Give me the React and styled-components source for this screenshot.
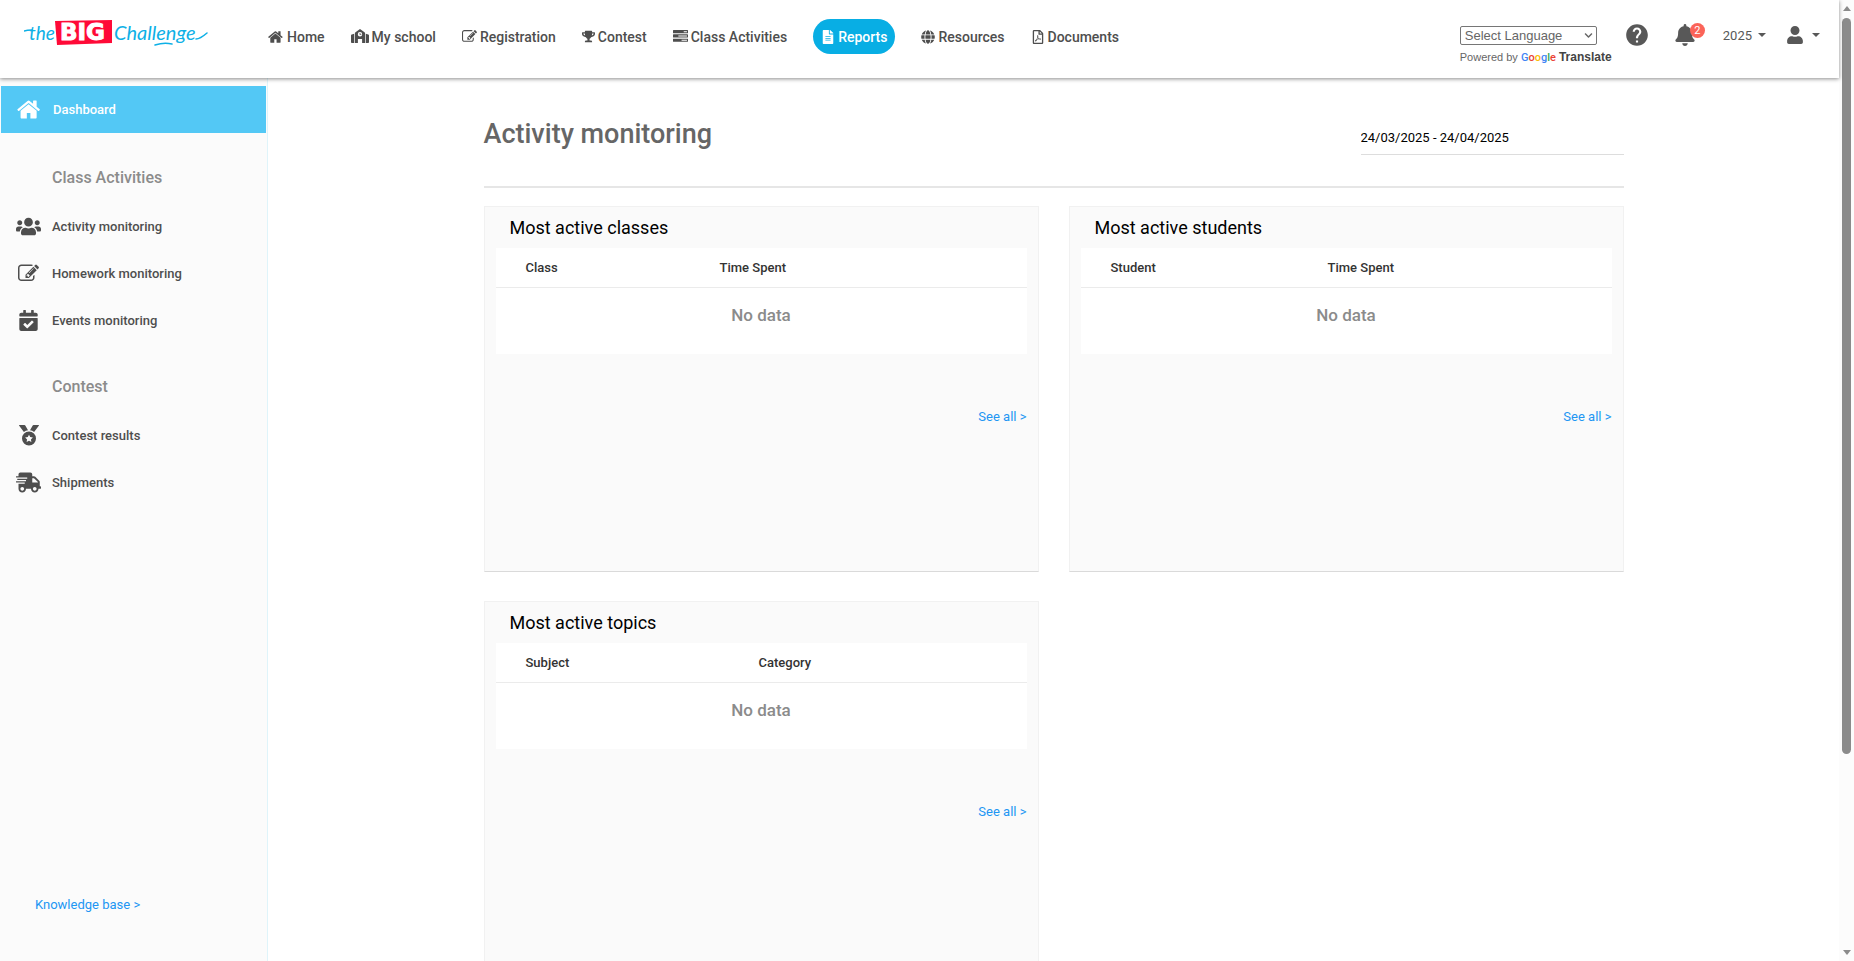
import React, { Component } from 'react';
import styled, { createGlobalStyle } from 'styled-components'
import { FaTrophy, FaFileAlt, FaGlobe, FaRegFilePdf, FaUsers, FaCalendarCheck, FaShippingFast, FaBell, FaUser, FaChevronDown } from 'react-icons/fa'
import { MdHelp } from 'react-icons/md'

const GlobalStyle = createGlobalStyle`
  * {
    box-sizing: border-box;
  }
  body {
    margin: 0;
    font-family: Roboto, sans-serif;
    font-size: 13px;
    color: #4e4e4e;
    background: #ffffff;
  }
  a {
    color: inherit;
    text-decoration: none;
  }
  button, input, select {
    font-family: inherit;
    color: inherit;
  }
  svg {
    flex-shrink: 0;
  }
`

const MainContainer = styled.div`
  display: grid;
  grid-template-columns: 1fr 15px;
  height: 100vh;
  overflow: hidden;
`

const Page = styled.div`
  display: flex;
  flex-direction: column;
  min-width: 0;
  min-height: 0;
`

const Header = styled.header`
  display: flex;
  align-items: flex-start;
  height: 78px;
  flex-shrink: 0;
  padding: 0 19px 0 24px;
  background: #ffffff;
  box-shadow: 0 1px 4px rgba(0, 0, 0, 0.45);
  position: relative;
  z-index: 2;
`

const LogoLink = styled.a`
  width: 244px;
  padding-top: 18px;
`

const Nav = styled.nav`
  display: flex;
  gap: 26px;
  padding-top: 19px;
`

const NavLink = styled.a`
  display: flex;
  align-items: center;
  gap: 3px;
  height: 35px;
  padding: ${props => props.$active ? '0 8px' : '0'};
  border-radius: 18px;
  font-size: 14px;
  font-weight: 500;
  white-space: nowrap;
  color: ${props => props.$active ? '#ffffff' : '#4e4e4e'};
  background: ${props => props.$active ? '#08aee4' : 'transparent'};
`

const Tools = styled.div`
  display: flex;
  align-items: flex-start;
  margin-left: auto;
  padding-top: 24px;
`

const Translate = styled.div`
  width: 152px;
  margin-right: 12px;
  font-family: "Liberation Sans", Arial, sans-serif;
  font-size: 11px;
  color: #666666;
  white-space: nowrap;

  b {
    font-size: 12px;
    color: #444444;
  }
`

const SelectWrap = styled.label`
  display: grid;
  align-items: center;
  width: 137px;
  margin: 2px 0 5px;

  select {
    grid-area: 1 / 1;
    appearance: none;
    height: 19px;
    width: 100%;
    padding: 0 4px;
    border: 1px solid #767676;
    border-radius: 2px;
    background: #ffffff;
    font-size: 13px;
    color: #666666;
  }
  svg {
    grid-area: 1 / 1;
    justify-self: end;
    margin-right: 4px;
    pointer-events: none;
  }
`

const Google = styled.span`
  font-family: Roboto, sans-serif;
  font-size: 11px;
  font-weight: 500;
`

const Letter = styled.span`
  color: ${props => props.$color};
`

const IconButton = styled.button`
  display: flex;
  align-items: center;
  gap: ${props => props.$gap || '0'};
  height: 22px;
  margin-left: ${props => props.$left || '0'};
  padding: 0;
  border: 0;
  background: none;
  position: relative;
  font-size: 13px;
  color: #585858;
`

const Caret = styled.span`
  border: 4px solid transparent;
  border-top-color: #585858;
  border-bottom: 0;
`

const Badge = styled.span`
  position: absolute;
  top: -1px;
  right: -9px;
  width: 15px;
  height: 15px;
  border-radius: 50%;
  background: #fb6459;
  color: #ffffff;
  font-size: 11px;
  line-height: 15px;
  text-align: center;
`

const Body = styled.div`
  display: grid;
  grid-template-columns: 268px 1fr;
  flex: 1;
  min-height: 0;
`

const Sidebar = styled.aside`
  display: flex;
  flex-direction: column;
  padding: 8px 1px 0;
  border-right: 1px solid #dff4fa;
  background: #fbfbfb;
`

const SideTitle = styled.h2`
  margin: 33px 0 25px 51px;
  font-size: 16px;
  font-weight: 500;
  line-height: 24px;
  color: #8b8b8b;
`

const SideLink = styled.a`
  display: grid;
  grid-template-columns: 47px 1fr;
  align-items: center;
  height: 47px;
  padding-left: ${props => props.$active ? '5px' : '4px'};
  font-size: 13px;
  font-weight: 500;
  color: ${props => props.$active ? '#ffffff' : '#4e4e4e'};
  background: ${props => props.$active ? '#53c8f5' : 'transparent'};

  svg {
    justify-self: center;
  }
`

const SideGroup = styled.div`
  display: flex;
  flex-direction: column;
  margin: -12px 0 -2px;
`

const Knowledge = styled.a`
  margin: auto 0 46px 34px;
  line-height: 20px;
  font-size: 13px;
  color: #2196f3;
`

const Content = styled.main`
  min-height: 0;
  overflow: hidden;
  padding: 33px 30px 0;
`

const Inner = styled.div`
  max-width: 1140px;
  margin: 0 auto;
`

const TitleRow = styled.div`
  display: flex;
  justify-content: space-between;
  align-items: flex-start;
  height: 77px;
  border-bottom: 2px solid #e6e6e6;
  margin-bottom: 18px;
`

const PageTitle = styled.h1`
  margin: 6px 0 0;
  font-size: 27px;
  font-weight: 500;
  line-height: 34px;
  color: #666666;
`

const DateInput = styled.input`
  width: 263px;
  height: 33px;
  margin-top: 11px;
  padding: 0 0 2px;
  border: 0;
  border-bottom: 1px solid #dddddd;
  background: transparent;
  font-size: 13px;
  color: #000000;
`

const Cards = styled.div`
  display: grid;
  grid-template-columns: 1fr 1fr;
  gap: 29px 30px;
`

const Card = styled.section`
  min-height: 366px;
  padding: 8px 11px;
  border: 1px solid #f1f1f1;
  border-bottom-color: #dadada;
  background: #fafafa;
`

const CardTitle = styled.h3`
  margin: 0 0 7px 14px;
  font-size: 18px;
  font-weight: 400;
  line-height: 26px;
  color: #000000;
`

const Table = styled.table`
  width: 100%;
  table-layout: fixed;
  border-collapse: collapse;
  background: #ffffff;

  th {
    height: 39px;
    padding: 0 0 0 30px;
    border-bottom: 1px solid #ebebeb;
    text-align: left;
    font-size: 13px;
    font-weight: 500;
    color: #333333;
  }
  th:first-child {
    width: ${props => props.$first};
  }
  th + th {
    padding-left: 0;
  }
  td {
    height: 67px;
    padding: 0 0 11px;
    text-align: center;
    font-size: 17px;
    font-weight: 500;
    color: #8b8b8b;
  }
`

const SeeAll = styled.a`
  display: block;
  margin-top: 53px;
  text-align: right;
  line-height: 20px;
  font-size: 13px;
  color: #2196f3;
`

const Scrollbar = styled.div`
  display: flex;
  flex-direction: column;
  align-items: center;
  padding: 6px 0;
  background: #fcfcfc;
`

const Arrow = styled.span`
  border: 4px solid transparent;
  border-top: ${props => props.$up ? '0' : '5px solid #8b8b8b'};
  border-bottom: ${props => props.$up ? '5px solid #8b8b8b' : '0'};
`

const Track = styled.div`
  flex: 1;
  width: 9px;
  padding: 7px 0 12px;
`

const Thumb = styled.div`
  height: 80%;
  border-radius: 5px;
  background: #8b8b8b;
`

const Icon = ({ d, size }) => (
  <svg width={size} height={size} viewBox="0 0 1792 1792" fill="currentColor" aria-hidden="true">
    <path d={d} />
  </svg>
)

const homePath = "M1408 992v480q0 26-19 45t-45 19h-384v-384h-256v384h-384q-26 0-45-19t-19-45v-480q0-1 .5-3t.5-3l575-474 575 474q1 2 1 6zm223-69l-62 74q-8 9-21 11h-3q-13 0-21-7l-692-577-692 577q-12 8-24 7-13-2-21-11l-62-74q-8-10-7-23.500t11-21.500l719-599q32-26 76-26t76 26l244 204v-195q0-14 9-23t23-9h192q14 0 23 9t9 23v408l219 182q10 8 11 21.500t-7 23.500z"
const editPath = "M888 1184l116-116-152-152-116 116v56h96v96h56zm440-720q-16-16-33 1l-350 350q-17 17-1 33t33-1l350-350q17-17 1-33zm80 594v190q0 119-84.500 203.500t-203.500 84.500h-832q-119 0-203.500-84.500t-84.500-203.500v-832q0-119 84.500-203.500t203.500-84.500h832q63 0 117 25 15 7 18 23 3 17-9 29l-49 49q-14 14-32 8-23-6-45-6h-832q-66 0-113 47t-47 113v832q0 66 47 113t113 47h832q66 0 113-47t47-113v-126q0-13 9-22l64-64q15-15 35-7t20 29zm-96-738l288 288-672 672h-288v-288zm444 132l-92 92-288-288 92-92q28-28 68-28t68 28l152 152q28 28 28 68t-28 68z"
const tasksPath = "M1024 1408h640v-128h-640v128zm-384-512h1024v-128h-1024v128zm640-512h384v-128h-384v128zm512 832v256q0 26-19 45t-45 19h-1664q-26 0-45-19t-19-45v-256q0-26 19-45t45-19h1664q26 0 45 19t19 45zm0-512v256q0 26-19 45t-45 19h-1664q-26 0-45-19t-19-45v-256q0-26 19-45t45-19h1664q26 0 45 19t19 45zm0-512v256q0 26-19 45t-45 19h-1664q-26 0-45-19t-19-45v-256q0-26 19-45t45-19h1664q26 0 45 19t19 45z"

const SchoolIcon = () => (
  <svg width="18" height="15" viewBox="0 0 18 15" fill="currentColor" aria-hidden="true">
    <path d="M0 6.500q0-.8.800-1l2.400-.7V14H.8Q0 14 0 13zM18 6.500q0-.8-.8-1l-2.400-.7V14h2.400q.8 0 .8-1z" />
    <path fillRule="evenodd" d="M9 0l4.500 3.200q.6.400.6 1.200V14h-3V10H6.900v4h-3V4.400q0-.8.600-1.200zM9 3a2.200 2.200 0 1 0 0 4.400A2.200 2.200 0 0 0 9 3zm-.4 1h.8v1h.9v.8H8.600z" />
  </svg>
)

const MedalIcon = () => (
  <svg width="20" height="21" viewBox="0 0 20 21" fill="currentColor" aria-hidden="true">
    <path d="M0 0h5.500q.5 0 .8.500L9 5.200Q6.600 5.500 4.900 7L.2.800zM20 0h-5.500q-.5 0-.8.500L11 5.200q2.400.3 4.100 1.800L19.800.8z" />
    <path fillRule="evenodd" d="M10 6.500a7 7 0 1 0 0 14 7 7 0 0 0 0-14zm0 3.200l1.200 2.400 2.700.4-2 1.900.5 2.700L10 15.800l-2.400 1.300.5-2.700-2-1.900 2.700-.4z" />
  </svg>
)

const Logo = () => (
  <svg width="186" height="34" viewBox="0 0 186 34" role="img" aria-label="the BIG Challenge">
    <text x="5" y="22" fontFamily="Lato, sans-serif" fontStyle="italic" fontSize="19" fill="#0eb0e6">the</text>
    <path d="M31 3l57-1v23l-55 2z" fill="#ff0a37" />
    <text x="36" y="22" fontFamily="DejaVu Sans, sans-serif" fontWeight="700" fontSize="23" fill="#ffffff" stroke="#ffffff">BIG</text>
    <text x="90" y="22" fontFamily="Lato, sans-serif" fontStyle="italic" fontSize="20" fill="#0eb0e6">Challenge</text>
    <path d="M0 13q3-1 8-1M172 21q4 0 11-6M131 27q9-3 17-1" fill="none" stroke="#0eb0e6" strokeWidth="1.500" strokeLinecap="round" />
  </svg>
)

const navItems = [
  { label: 'Home', icon: <Icon d={homePath} size={16} /> },
  { label: 'My school', icon: <SchoolIcon /> },
  { label: 'Registration', icon: <Icon d={editPath} size={15} /> },
  { label: 'Contest', icon: <FaTrophy size={13} /> },
  { label: 'Class Activities', icon: <Icon d={tasksPath} size={15} /> },
  { label: 'Reports', icon: <FaFileAlt size={14} />, active: true },
  { label: 'Resources', icon: <FaGlobe size={14} /> },
  { label: 'Documents', icon: <FaRegFilePdf size={14} /> },
]

const googleLetters = [['G', '#4285f4'], ['o', '#ea4335'], ['o', '#fbbc05'], ['g', '#4285f4'], ['l', '#34a853'], ['e', '#ea4335']]

const ReportCard = ({ title, first, second, width }) => (
  <Card>
    <CardTitle>{title}</CardTitle>
    <Table $first={width}>
      <thead>
        <tr><th>{first}</th><th>{second}</th></tr>
      </thead>
      <tbody>
        <tr><td colSpan="2">No data</td></tr>
      </tbody>
    </Table>
    <SeeAll href="#all">See all &gt;</SeeAll>
  </Card>
)

export default class App extends Component {
  render() {
    return (
      <MainContainer>
        <GlobalStyle />
        <Page>
          <Header>
            <LogoLink href="#home"><Logo /></LogoLink>
            <Nav>
              {navItems.map(item => (
                <NavLink key={item.label} href="#nav" $active={item.active}>{item.icon}{item.label}</NavLink>
              ))}
            </Nav>
            <Tools>
              <Translate>
                <SelectWrap>
                  <select aria-label="Select Language">
                    <option>Select Language</option>
                  </select>
                  <FaChevronDown size={9} />
                </SelectWrap>
                Powered by <Google>{googleLetters.map(([letter, color], i) => <Letter key={i} $color={color}>{letter}</Letter>)}</Google> <b>Translate</b>
              </Translate>
              <IconButton aria-label="Help"><MdHelp size={26} /></IconButton>
              <IconButton aria-label="Notifications" $left="24px"><FaBell size={22} /><Badge>2</Badge></IconButton>
              <IconButton $left="27px" $gap="6px">2025 <Caret /></IconButton>
              <IconButton aria-label="Account" $left="20px" $gap="8px"><FaUser size={18} /><Caret /></IconButton>
            </Tools>
          </Header>
          <Body>
            <Sidebar>
              <SideLink href="#dashboard" $active><Icon d={homePath} size={25} />Dashboard</SideLink>
              <SideTitle>Class Activities</SideTitle>
              <SideGroup>
                <SideLink href="#activity"><FaUsers size={25} />Activity monitoring</SideLink>
                <SideLink href="#homework"><Icon d={editPath} size={21} />Homework monitoring</SideLink>
                <SideLink href="#events"><FaCalendarCheck size={21} />Events monitoring</SideLink>
              </SideGroup>
              <SideTitle>Contest</SideTitle>
              <SideGroup>
                <SideLink href="#results"><MedalIcon />Contest results</SideLink>
                <SideLink href="#shipments"><FaShippingFast size={25} />Shipments</SideLink>
              </SideGroup>
              <Knowledge href="#knowledge">Knowledge base &gt;</Knowledge>
            </Sidebar>
            <Content>
              <Inner>
                <TitleRow>
                  <PageTitle>Activity monitoring</PageTitle>
                  <DateInput aria-label="Period" defaultValue="24/03/2025 - 24/04/2025" />
                </TitleRow>
                <Cards>
                  <ReportCard title="Most active classes" first="Class" second="Time Spent" width="224px" />
                  <ReportCard title="Most active students" first="Student" second="Time Spent" width="247px" />
                  <ReportCard title="Most active topics" first="Subject" second="Category" width="263px" />
                </Cards>
              </Inner>
            </Content>
          </Body>
        </Page>
        <Scrollbar>
          <Arrow $up />
          <Track><Thumb /></Track>
          <Arrow />
        </Scrollbar>
      </MainContainer>
    )
  }
}
